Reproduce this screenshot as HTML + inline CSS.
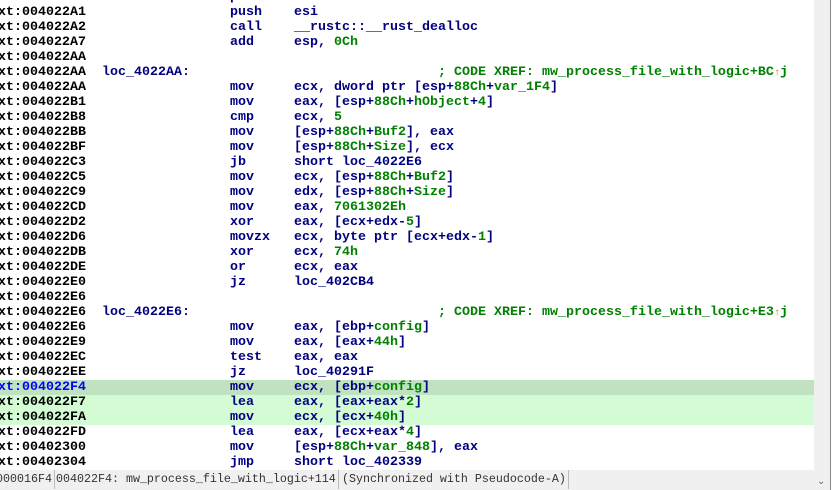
<!DOCTYPE html>
<html><head><style>
body{margin:0;width:834px;height:490px;overflow:hidden;background:#fff;position:relative;font-family:"Liberation Mono",monospace;}
.r{position:absolute;left:0;width:814px;height:15px;font-size:13.33px;font-weight:bold;line-height:16px;white-space:pre;color:#000080}
.r span{position:absolute;top:0}
.a{left:-18px;color:#000}
.l{left:102px}
.m{left:230px}
.o{left:294px}
.c{left:438px;color:#008000}
.g{color:#008000}
.h1{background:#c0e2c0}.h2{background:#d4fcd4}
.ar{color:#b08000;font-size:10px}
#sb{position:absolute;left:814px;top:0;width:16px;height:490px;background:#f0f0f0;border-right:1px solid #888}
#st{position:absolute;left:0;top:470px;width:814px;height:20px;background:#f0f0f0;font-size:11.67px;line-height:19px;color:#333;white-space:pre}
#st span{position:absolute;top:0;border-right:1px solid #bbb;padding-right:2px}
</style></head><body>
<div class="r" style="top:-10px"><span class="a">text:004022A0</span><span class="m">push</span><span class="o">ecx</span></div>
<div class="r" style="top:5px"><span class="a">text:004022A1</span><span class="m">push</span><span class="o">esi</span></div>
<div class="r" style="top:20px"><span class="a">text:004022A2</span><span class="m">call</span><span class="o">__rustc::__rust_dealloc</span></div>
<div class="r" style="top:35px"><span class="a">text:004022A7</span><span class="m">add</span><span class="o">esp, <b class="g">0Ch</b></span></div>
<div class="r" style="top:50px"><span class="a">text:004022AA</span></div>
<div class="r" style="top:65px"><span class="a">text:004022AA</span><span class="l">loc_4022AA:</span><span class="c">; CODE XREF: mw_process_file_with_logic+BC<b class="ar">↑</b>j</span></div>
<div class="r" style="top:80px"><span class="a">text:004022AA</span><span class="m">mov</span><span class="o">ecx, dword ptr [esp+<b class="g">88Ch</b>+<b class="g">var_1F4</b>]</span></div>
<div class="r" style="top:95px"><span class="a">text:004022B1</span><span class="m">mov</span><span class="o">eax, [esp+<b class="g">88Ch</b>+<b class="g">hObject</b>+<b class="g">4</b>]</span></div>
<div class="r" style="top:110px"><span class="a">text:004022B8</span><span class="m">cmp</span><span class="o">ecx, <b class="g">5</b></span></div>
<div class="r" style="top:125px"><span class="a">text:004022BB</span><span class="m">mov</span><span class="o">[esp+<b class="g">88Ch</b>+<b class="g">Buf2</b>], eax</span></div>
<div class="r" style="top:140px"><span class="a">text:004022BF</span><span class="m">mov</span><span class="o">[esp+<b class="g">88Ch</b>+<b class="g">Size</b>], ecx</span></div>
<div class="r" style="top:155px"><span class="a">text:004022C3</span><span class="m">jb</span><span class="o">short loc_4022E6</span></div>
<div class="r" style="top:170px"><span class="a">text:004022C5</span><span class="m">mov</span><span class="o">ecx, [esp+<b class="g">88Ch</b>+<b class="g">Buf2</b>]</span></div>
<div class="r" style="top:185px"><span class="a">text:004022C9</span><span class="m">mov</span><span class="o">edx, [esp+<b class="g">88Ch</b>+<b class="g">Size</b>]</span></div>
<div class="r" style="top:200px"><span class="a">text:004022CD</span><span class="m">mov</span><span class="o">eax, <b class="g">7061302Eh</b></span></div>
<div class="r" style="top:215px"><span class="a">text:004022D2</span><span class="m">xor</span><span class="o">eax, [ecx+edx-<b class="g">5</b>]</span></div>
<div class="r" style="top:230px"><span class="a">text:004022D6</span><span class="m">movzx</span><span class="o">ecx, byte ptr [ecx+edx-<b class="g">1</b>]</span></div>
<div class="r" style="top:245px"><span class="a">text:004022DB</span><span class="m">xor</span><span class="o">ecx, <b class="g">74h</b></span></div>
<div class="r" style="top:260px"><span class="a">text:004022DE</span><span class="m">or</span><span class="o">ecx, eax</span></div>
<div class="r" style="top:275px"><span class="a">text:004022E0</span><span class="m">jz</span><span class="o">loc_402CB4</span></div>
<div class="r" style="top:290px"><span class="a">text:004022E6</span></div>
<div class="r" style="top:305px"><span class="a">text:004022E6</span><span class="l">loc_4022E6:</span><span class="c">; CODE XREF: mw_process_file_with_logic+E3<b class="ar">↑</b>j</span></div>
<div class="r" style="top:320px"><span class="a">text:004022E6</span><span class="m">mov</span><span class="o">eax, [ebp+<b class="g">config</b>]</span></div>
<div class="r" style="top:335px"><span class="a">text:004022E9</span><span class="m">mov</span><span class="o">eax, [eax+<b class="g">44h</b>]</span></div>
<div class="r" style="top:350px"><span class="a">text:004022EC</span><span class="m">test</span><span class="o">eax, eax</span></div>
<div class="r" style="top:365px"><span class="a">text:004022EE</span><span class="m">jz</span><span class="o">loc_40291F</span></div>
<div class="r h1" style="top:380px"><span class="a" style="color:#0000ff">text:004022F4</span><span class="m">mov</span><span class="o">ecx, [ebp+<b class="g">config</b>]</span></div>
<div class="r h2" style="top:395px"><span class="a">text:004022F7</span><span class="m">lea</span><span class="o">eax, [eax+eax*<b class="g">2</b>]</span></div>
<div class="r h2" style="top:410px"><span class="a">text:004022FA</span><span class="m">mov</span><span class="o">ecx, [ecx+<b class="g">40h</b>]</span></div>
<div class="r" style="top:425px"><span class="a">text:004022FD</span><span class="m">lea</span><span class="o">eax, [ecx+eax*<b class="g">4</b>]</span></div>
<div class="r" style="top:440px"><span class="a">text:00402300</span><span class="m">mov</span><span class="o">[esp+<b class="g">88Ch</b>+<b class="g">var_848</b>], eax</span></div>
<div class="r" style="top:455px"><span class="a">text:00402304</span><span class="m">jmp</span><span class="o">short loc_402339</span></div>
<div id="sb"><div style="position:absolute;left:3px;top:476px;font-size:10px;color:#666;font-family:'Liberation Sans',sans-serif">&#8964;</div></div>
<div id="st"><span style="left:-4px">000016F4</span><span style="left:56px">004022F4: mw_process_file_with_logic+114</span><span style="left:342px">(Synchronized with Pseudocode-A)</span></div>
</body></html>
